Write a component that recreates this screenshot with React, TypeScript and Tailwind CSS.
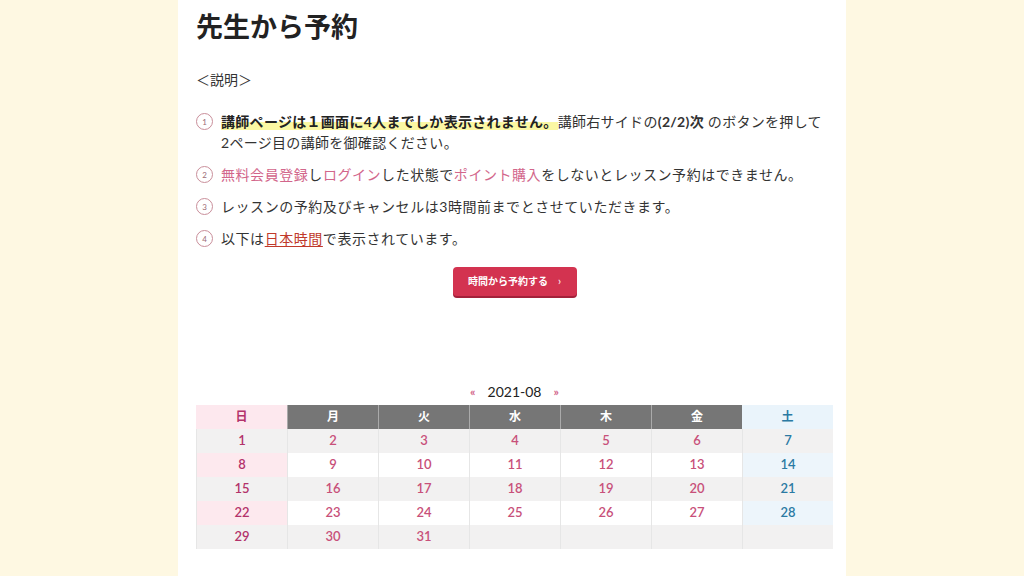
import React from "react";

const weeks: (number | null)[][] = [
  [1, 2, 3, 4, 5, 6, 7],
  [8, 9, 10, 11, 12, 13, 14],
  [15, 16, 17, 18, 19, 20, 21],
  [22, 23, 24, 25, 26, 27, 28],
  [29, 30, 31, null, null, null, null],
];

const days = ["日", "月", "火", "水", "木", "金", "土"];

function Num({ n }: { n: number }) {
  return (
    <span className="mr-[8px] mt-[2px] flex h-[17px] w-[17px] shrink-0 items-center justify-center rounded-full border border-[#c98e9a] text-[8px] leading-none tracking-normal text-[#9b6b75]">
      {n}
    </span>
  );
}

function cellBg(row: number, col: number) {
  const odd = row % 2 === 1;
  if (!odd) return "bg-[#f2f1f1]";
  if (col === 0) return "bg-[#fde9ee]";
  if (col === 6) return "bg-[#edf5fb]";
  return "bg-white";
}

function cellColor(col: number) {
  if (col === 0) return "text-[#b3326a]";
  if (col === 6) return "text-[#2b7aa3]";
  return "text-[#c8507a]";
}

export default function App() {
  return (
    <div className="flex min-h-[576px] w-full justify-center bg-[#fef8e2]">
      <div className="w-[668px] bg-white pl-[18px] pr-[13px] pt-[9px] pb-[28px] font-['Lato','Noto_Sans_CJK_JP',sans-serif] text-[#333]">
        <h1 className="text-[27px] font-bold leading-[36px] text-[#222]">
          先生から予約
        </h1>

        <p className="mt-[24px] text-[14px] leading-[21px]">＜説明＞</p>

        <ul className="mt-[21px] flex flex-col gap-[11px] text-[14px] leading-[21px] tracking-[0.55px]">
          <li className="flex tracking-[0.3px]">
            <Num n={1} />
            <span>
              <b className="bg-[linear-gradient(transparent_50%,#fbf7a3_50%)] font-bold text-[#222]">
                講師ページは１画面に4人までしか表示されません。
              </b>
              講師右サイドの<b className="font-bold">(2/2)次</b> のボタンを押して
              <br />
              2ページ目の講師を御確認ください。
            </span>
          </li>
          <li className="flex">
            <Num n={2} />
            <span>
              <span className="text-[#d2668b]">無料会員登録</span>し
              <span className="text-[#d2668b]">ログイン</span>した状態で
              <span className="text-[#d2668b]">ポイント購入</span>
              をしないとレッスン予約はできません。
            </span>
          </li>
          <li className="flex">
            <Num n={3} />
            <span>レッスンの予約及びキャンセルは3時間前までとさせていただきます。</span>
          </li>
          <li className="flex">
            <Num n={4} />
            <span>
              以下は
              <span className="text-[#c0392b] underline underline-offset-2">日本時間</span>
              で表示されています。
            </span>
          </li>
        </ul>

        <div className="mt-[18px] flex justify-center">
          <button className="flex h-[29px] w-[124px] items-center justify-center gap-[10px] rounded-[4px] bg-[#d33350] text-[10px] font-bold text-white shadow-[0_2px_0_#a3213a]">
            <span>時間から予約する</span>
            <span className="text-[11px] font-normal">›</span>
          </button>
        </div>

        <div className="mt-[86px] flex items-center justify-center gap-[12px] text-[14px] leading-[20px]">
          <span className="text-[12px] font-bold text-[#d2668b]">«</span>
          <span className="text-[#222]">2021-08</span>
          <span className="text-[12px] font-bold text-[#d2668b]">»</span>
        </div>

        <div className="mt-[3px] grid grid-cols-7 text-[12px]">
          {days.map((d, i) => (
            <div
              key={d}
              className={
                "flex h-[24px] items-center justify-center font-bold " +
                (i === 0
                  ? "bg-[#fde8ee] text-[#b3326a]"
                  : i === 6
                  ? "bg-[#eaf4fb] text-[#2b7aa3]"
                  : "border-l border-[#aaa] bg-[#767676] text-white")
              }
            >
              {d}
            </div>
          ))}
          {weeks.map((w, r) =>
            w.map((n, c) => (
              <div
                key={r + "-" + c}
                className={
                  "flex h-[24px] items-center justify-center border-l border-[#e6e6e6] text-[13px] font-semibold " +
                  cellBg(r, c) +
                  " " +
                  cellColor(c)
                }
              >
                {n ?? ""}
              </div>
            ))
          )}
        </div>
      </div>
    </div>
  );
}
